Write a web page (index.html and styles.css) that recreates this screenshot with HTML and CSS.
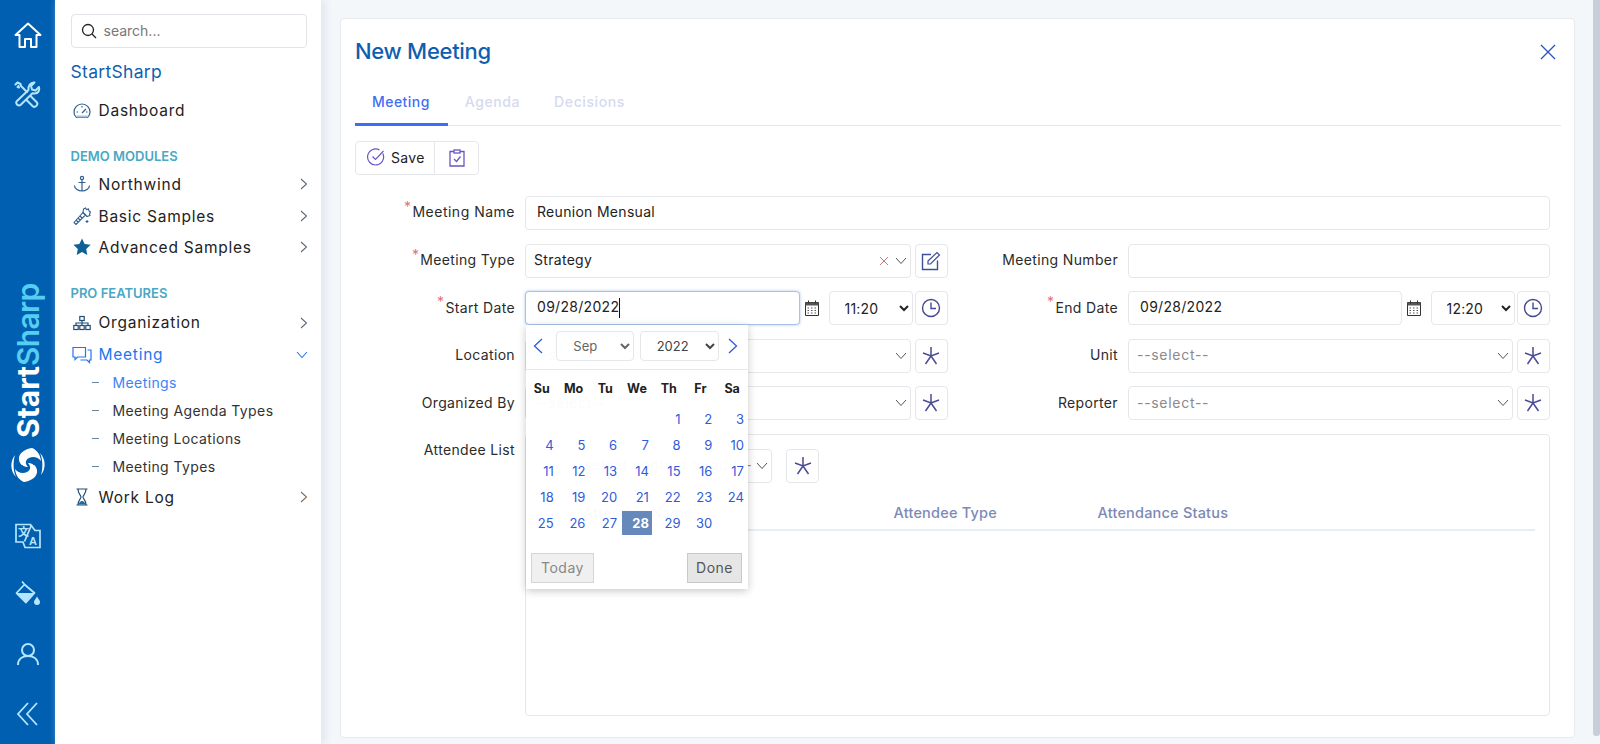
FILE: index.html
```html
<!DOCTYPE html>
<html lang="en">
<head>
  <meta charset="UTF-8">
  <meta name="viewport" content="width=device-width, initial-scale=1.0">
  <title>New Meeting</title>
  <link rel="stylesheet" href="styles.css">
</head>
<body>
  <div class="rail">
    <svg class="rail-home" viewBox="0 0 28 28" width="28" height="28"><path d="M1.500 14 14 2.500 26.500 14H22.500V26H17V18H11V26H5.500V14Z" fill="none" stroke="#fff" stroke-width="2" stroke-linejoin="round"/></svg>
    <svg class="rail-tools" viewBox="0 0 28 28" width="28" height="28" fill="none" stroke="#b5e6ff" stroke-width="2" stroke-linejoin="round" stroke-linecap="round"><path d="M20.500 1.500 17 5l1 3.500 3.500 1 3.500-3.500c1 3-.5 6.500-4.500 6.500-1 0-1.500 0-2-.2L7 23.500c-2.500 2.500-6.500-1-4-3.500L14.500 9c-.8-4 2-8 6-7.500Z"/><path d="M1.500 3.500 3.500 1.500l3 1.500.5 2L13 11M16.500 15l6 6c2.500 2.500-1.500 6.500-4 4l-6-6M3.500 6l1.500.5-.5-1.500"/></svg>
    <div class="rail-brand"><span>Start</span><span class="rail-brand-b">Sharp</span></div>
    <svg class="rail-logo" viewBox="0 0 36 36" width="36" height="36" fill="#fff">
      <path d="M22 1C14 2 8 7 9 13c1 5 5 7 9 7-3-3-3-7 1-9 4-2 9-1 12 3-1-7-4-11-9-13Z"/>
      <path d="M22 1C14 2 8 7 9 13c1 5 5 7 9 7-3-3-3-7 1-9 4-2 9-1 12 3-1-7-4-11-9-13Z" transform="rotate(180 18 18)"/>
      <path d="M5 8C0 14 0 24 6 30 3 24 3 14 5 8Z"/>
      <path d="M5 8C0 14 0 24 6 30 3 24 3 14 5 8Z" transform="rotate(180 18 18)"/>
      <g fill="#005fb0"><circle cx="21" cy="14" r="1"/><circle cx="24" cy="17" r="1"/><circle cx="15" cy="22" r="1"/><circle cx="12" cy="19" r="1"/></g>
    </svg>
    <svg class="rail-lang" viewBox="0 0 26 26" width="26" height="26" fill="none" stroke="#b5e6ff" stroke-width="1.700"><path d="M1 1.500H15.500L20 7.500H25V24.500H10L8 19H1Z"/><path d="M16.500 2 9.500 18.500"/><text x="3" y="13" class="rail-lang-t" fill="#b5e6ff" stroke="none">文</text><text x="14" y="21.500" class="rail-lang-a" fill="#b5e6ff" stroke="none">A</text></svg>
    <svg class="rail-paint" viewBox="0 0 26 26" width="26" height="26"><path d="M7 1.500 10 5M9.500 4.500 19.500 13 11 22.500 1.500 13Z" fill="none" stroke="#b5e6ff" stroke-width="1.800" stroke-linejoin="round"/><path d="M2 13H19L11 22Z" fill="#b5e6ff"/><path d="M22 16.500c-1.500 2.500-3 4-3 5.500a3 3 0 0 0 6 0c0-1.500-1.500-3-3-5.500Z" fill="#b5e6ff"/></svg>
    <svg class="rail-user" viewBox="0 0 24 24" width="24" height="24" fill="none" stroke="#b5e6ff" stroke-width="2"><circle cx="12" cy="8" r="6"/><path d="M2 23c0-6 4.500-9 10-9s10 3 10 9"/></svg>
    <svg class="rail-collapse" viewBox="0 0 22 24" width="22" height="24" fill="none" stroke="#b5e6ff" stroke-width="1.800"><path d="M11 1 1 12 11 23M20 1 10 12 20 23"/></svg>
  </div>

  <div class="sidebar">
    <div class="search">
      <svg viewBox="0 0 16 16" width="16" height="16" fill="none" stroke="#222" stroke-width="1.300"><circle cx="7" cy="7" r="5.500"/><path d="M11 11 15 15"/></svg>
      <span>search...</span>
    </div>
    <div class="brand">StartSharp</div>
    <div class="nav-item nav-dash">
      <svg class="nav-icon" viewBox="0 0 18 18" fill="none" stroke="#2f5f8f" stroke-width="1.200"><path d="M3.500 15.500C1.500 14 1 12 1 10a8 8 0 0 1 16 0c0 2-.5 4-2.500 5.500Z"/><path d="M9 11l4-4M3.500 10H5M9 4v1.500M13 10h1.500" /><path d="M3.500 13.500H14.500V15.500H3.500Z" fill="#a9c4de" stroke="none"/></svg>
      <span>Dashboard</span>
    </div>
    <div class="nav-head nav-head-demo">DEMO MODULES</div>
    <div class="nav-item nav-first">
      <svg class="nav-icon" viewBox="0 0 18 18" fill="none" stroke="#2f5f8f" stroke-width="1.200"><circle cx="9" cy="3" r="1.600"/><path d="M9 4.500V16M5.500 7.500h7M1.500 10.500c0 3.500 4 5.500 7.500 5.500s7.500-2 7.500-5.500"/></svg>
      <span>Northwind</span>
      <svg class="nav-arrow" viewBox="0 0 8 12"><path d="M1 1l5.500 5L1 11"/></svg>
    </div>
    <div class="nav-item nav-basic">
      <svg class="nav-icon" viewBox="0 0 18 18" fill="none" stroke="#2f5f8f" stroke-width="1.100"><path d="M1 15.500 10 5.500l2.500 2.500-9.500 9.500ZM3 13l2 2M5 11l2 2M7 9l2 2"/><path d="M10.500 2l2-1 1 1.500 2-.5.500 2 1.500 1-1 2 .5 1.500-3 1-4-4Z"/><path d="M14 13v3M12.500 14.500h3" /></svg>
      <span>Basic Samples</span>
      <svg class="nav-arrow" viewBox="0 0 8 12"><path d="M1 1l5.500 5L1 11"/></svg>
    </div>
    <div class="nav-item">
      <svg class="nav-icon" viewBox="0 0 18 18"><path d="M9 .5l2.600 5.500 6 .8-4.400 4.200 1.100 6L9 14l-5.300 3 1.100-6L.4 6.800l6-.8Z" fill="#0f6096"/></svg>
      <span>Advanced Samples</span>
      <svg class="nav-arrow" viewBox="0 0 8 12"><path d="M1 1l5.500 5L1 11"/></svg>
    </div>
    <div class="nav-head nav-head-pro">PRO FEATURES</div>
    <div class="nav-item nav-org">
      <svg class="nav-icon" viewBox="0 0 18 18" fill="none" stroke="#1f4e79" stroke-width="1.200"><rect x="6.800" y="2.500" width="4.400" height="4"/><rect x=".8" y="11.500" width="4.400" height="4"/><rect x="6.800" y="11.500" width="4.400" height="4"/><rect x="12.800" y="11.500" width="4.400" height="4"/><path d="M9 6.500v5M3 11.500V9h12v2.500"/></svg>
      <span>Organization</span>
      <svg class="nav-arrow" viewBox="0 0 8 12"><path d="M1 1l5.500 5L1 11"/></svg>
    </div>
    <div class="nav-item nav-active">
      <svg class="nav-icon nav-icon-chat" viewBox="0 0 20 18" fill="none" stroke="#2176f0" stroke-width="1.200"><path d="M1 1.500H13.500V11H5.500L3 13.500V11H1Z"/><path d="M15.500 4H19V14H17.500V16.500L15 14H8.500"/></svg>
      <span>Meeting</span>
      <svg class="nav-arrow nav-arrow-open" viewBox="0 0 12 8"><path d="M1 1l5 5.500L11 1"/></svg>
    </div>
    <div class="nav-sub nav-sub-active"><i></i>Meetings</div>
    <div class="nav-sub"><i></i>Meeting Agenda Types</div>
    <div class="nav-sub"><i></i>Meeting Locations</div>
    <div class="nav-sub"><i></i>Meeting Types</div>
    <div class="nav-item nav-last">
      <svg class="nav-icon" viewBox="0 0 18 18" fill="none" stroke="#1f4e79" stroke-width="1.200"><path d="M3.500 1H14.500M3.500 17H14.500M5 1C5 6 8 7 8 9S5 12 5 17M13 1C13 6 10 7 10 9S13 12 13 17"/><path d="M5.500 16.500C6 14 8 13 9 13S12 14 12.500 16.500Z" fill="#1f6a99" stroke="none"/></svg>
      <span>Work Log</span>
      <svg class="nav-arrow nav-arrow-log" viewBox="0 0 8 12"><path d="M1 1l5.500 5L1 11"/></svg>
    </div>
  </div>

  <div class="main">
    <div class="card">
      <div class="card-head">
        <h2>New Meeting</h2>
        <svg class="close" viewBox="0 0 16 16" width="16" height="16"><path d="M1 1 15 15M15 1 1 15" stroke="#2b4fc4" stroke-width="1.300" fill="none"/></svg>
      </div>
      <div class="tabs">
        <div class="tab tab-active">Meeting</div>
        <div class="tab">Agenda</div>
        <div class="tab">Decisions</div>
      </div>
      <div class="toolbar">
        <div class="tool tool-save">
          <svg viewBox="0 0 18 18" width="18" height="18" fill="none" stroke="#6a55c8" stroke-width="1.200"><path d="M15.800 5.500A8 8 0 1 1 12.500 2"/><path d="M5.500 8.500 8.500 11.500 16.500 3"/></svg>
          Save
        </div>
        <div class="tool tool-apply">
          <svg viewBox="0 0 16 18" width="16" height="18" fill="none" stroke="#6a55c8" stroke-width="1.300"><path d="M5 2.500H1V17H15V2.500H11"/><rect x="5" y="1" width="6" height="3"/><path d="M5 10 7.500 12.500 11.500 7.500"/></svg>
        </div>
      </div>

      <div class="form">
        <label class="lbl lbl-name"><span class="req">*</span>Meeting Name</label>
        <input class="input wide" type="text" value="Reunion Mensual">

        <label class="lbl"><span class="req">*</span>Meeting Type</label>
        <div class="field">
          <div class="sel">
            <span class="sel-text sel-dark">Strategy</span>
            <svg class="sel-x" viewBox="0 0 10 10"><path d="M1 1 9 9M9 1 1 9"/></svg>
            <svg class="sel-arrow" viewBox="0 0 12 8"><path d="M1 1l5 5.500L11 1"/></svg>
          </div>
          <div class="btn">
            <svg viewBox="0 0 20 20" width="20" height="20" fill="none" stroke="#3f4f96" stroke-width="1.400"><path d="M10 3.500H1.500V18.500H16.500V9.500"/><path d="M7 10 16 1.500 18.500 4 9.500 13H7Z" stroke-width="1.200"/></svg>
          </div>
        </div>
        <label class="lbl">Meeting Number</label>
        <input class="input" type="text">

        <label class="lbl"><span class="req">*</span>Start Date</label>
        <div class="field date-field">
          <div class="input date-input date-focus">09/28/2022<span class="caret"></span></div>
          <svg class="cal-icon" viewBox="0 0 14 16" width="14" height="16"><path d="M.5 2.500h13v13H.5Z" fill="#fff" stroke="#333"/><path d="M.5 2.500h13v3H.5Z" fill="#555"/><path d="M3.500.5v3M10.500.5v3" stroke="#333"/><path d="M2.500 8h1.500M6 8h1.500M9.500 8h1.500M2.500 10.500h1.500M6 10.500h1.500M9.500 10.500h1.500M2.500 13h1.500M6 13h1.500M9.500 13h1.500" stroke="#555"/></svg>
          <select class="time"><option>11:20</option></select>
          <div class="btn btn-clock">
            <svg viewBox="0 0 20 20" width="20" height="20" fill="none" stroke="#45498f" stroke-width="1.400"><circle cx="10" cy="10" r="8.500"/><path d="M10 4.500V10.500H15"/></svg>
          </div>

          <div class="calendar">
            <div class="cal-top">
              <svg class="cal-nav" viewBox="0 0 10 16" width="10" height="16"><path d="M9 1 1.500 8 9 15"/></svg>
              <select class="cal-month"><option>Sep</option></select>
              <select class="cal-year"><option>2022</option></select>
              <svg class="cal-nav" viewBox="0 0 10 16" width="10" height="16"><path d="M1 1l7.500 7L1 15"/></svg>
            </div>
            <div class="cal-grid cal-days">
              <div>Su</div><div>Mo</div><div>Tu</div><div>We</div><div>Th</div><div>Fr</div><div>Sa</div>
            </div>
            <div class="cal-grid cal-nums">
              <a></a><a></a><a></a><a></a><a>1</a><a>2</a><a>3</a>
              <a>4</a><a>5</a><a>6</a><a>7</a><a>8</a><a>9</a><a>10</a>
              <a>11</a><a>12</a><a>13</a><a>14</a><a>15</a><a>16</a><a>17</a>
              <a>18</a><a>19</a><a>20</a><a>21</a><a>22</a><a>23</a><a>24</a>
              <a>25</a><a>26</a><a>27</a><a class="cal-sel">28</a><a>29</a><a>30</a><a></a>
            </div>
            <div class="cal-foot">
              <div class="cal-btn cal-today">Today</div>
              <div class="cal-btn cal-done">Done</div>
            </div>
          </div>
        </div>
        <label class="lbl"><span class="req">*</span>End Date</label>
        <div class="field">
          <div class="input date-input">09/28/2022</div>
          <svg class="cal-icon" viewBox="0 0 14 16" width="14" height="16"><path d="M.5 2.500h13v13H.5Z" fill="#fff" stroke="#333"/><path d="M.5 2.500h13v3H.5Z" fill="#555"/><path d="M3.500.5v3M10.500.5v3" stroke="#333"/><path d="M2.500 8h1.500M6 8h1.500M9.500 8h1.500M2.500 10.500h1.500M6 10.500h1.500M9.500 10.500h1.500M2.500 13h1.500M6 13h1.500M9.500 13h1.500" stroke="#555"/></svg>
          <select class="time"><option>12:20</option></select>
          <div class="btn btn-clock">
            <svg viewBox="0 0 20 20" width="20" height="20" fill="none" stroke="#45498f" stroke-width="1.400"><circle cx="10" cy="10" r="8.500"/><path d="M10 4.500V10.500H15"/></svg>
          </div>
        </div>

        <label class="lbl">Location</label>
        <div class="field">
          <div class="sel"><span class="sel-text">--select--</span><svg class="sel-arrow" viewBox="0 0 12 8"><path d="M1 1l5 5.500L11 1"/></svg></div>
          <div class="btn"><svg class="aster" viewBox="0 0 20 20" width="20" height="20"><path d="M10 1V10M2 7 10 10 18 7M10 10 4.500 18M10 10 15.500 18"/></svg></div>
        </div>
        <label class="lbl">Unit</label>
        <div class="field">
          <div class="sel"><span class="sel-text">--select--</span><svg class="sel-arrow" viewBox="0 0 12 8"><path d="M1 1l5 5.500L11 1"/></svg></div>
          <div class="btn"><svg class="aster" viewBox="0 0 20 20" width="20" height="20"><path d="M10 1V10M2 7 10 10 18 7M10 10 4.500 18M10 10 15.500 18"/></svg></div>
        </div>

        <label class="lbl">Organized By</label>
        <div class="field">
          <div class="sel"><span class="sel-text">--select--</span><svg class="sel-arrow" viewBox="0 0 12 8"><path d="M1 1l5 5.500L11 1"/></svg></div>
          <div class="btn"><svg class="aster" viewBox="0 0 20 20" width="20" height="20"><path d="M10 1V10M2 7 10 10 18 7M10 10 4.500 18M10 10 15.500 18"/></svg></div>
        </div>
        <label class="lbl">Reporter</label>
        <div class="field">
          <div class="sel"><span class="sel-text">--select--</span><svg class="sel-arrow" viewBox="0 0 12 8"><path d="M1 1l5 5.500L11 1"/></svg></div>
          <div class="btn"><svg class="aster" viewBox="0 0 20 20" width="20" height="20"><path d="M10 1V10M2 7 10 10 18 7M10 10 4.500 18M10 10 15.500 18"/></svg></div>
        </div>

        <label class="lbl lbl-top">Attendee List</label>
        <div class="attendees">
          <div class="att-add">
            <div class="sel"><span class="sel-text">--select contact to add--</span><svg class="sel-arrow" viewBox="0 0 12 8"><path d="M1 1l5 5.500L11 1"/></svg></div>
            <div class="btn"><svg class="aster" viewBox="0 0 20 20" width="20" height="20"><path d="M10 1V10M2 7 10 10 18 7M10 10 4.500 18M10 10 15.500 18"/></svg></div>
          </div>
          <div class="att-head">
            <div class="att-name">Attendee Name</div>
            <div class="att-type">Attendee Type</div>
            <div>Attendance Status</div>
          </div>
        </div>
      </div>
    </div>
  </div>

  <div class="scrollbar"><div class="scrollbar-thumb"></div></div>
</body>
</html>
```

FILE: styles.css
```css
* { box-sizing: border-box; }
html, body { height: 100%; }
body { margin: 0; display: flex; height: 744px; overflow: hidden; font-family: Inter, "Open Sans", sans-serif; font-size: 14px; color: #222; background: #f4f7fa; }

.rail { width: 55px; flex: none; background: #005fb0; display: flex; flex-direction: column; align-items: center; }
.rail svg { display: block; flex: none; }
.rail-home { margin-top: 21px; }
.rail-tools { margin-top: 32px; }
.rail-brand { writing-mode: vertical-rl; transform: rotate(180deg); font-size: 30px; font-weight: 700; color: #fff; line-height: 30px; height: 156px; margin-top: 173px; white-space: nowrap; display: flex; flex-direction: row; justify-content: flex-start; }
.rail-brand-b { color: #56cdf2; font-weight: 600; letter-spacing: -.7px; }
.rail-logo { margin-top: 9px; }
.rail-lang { margin-top: 40px; }
.rail-lang-t { font-family: "Noto Sans CJK SC", sans-serif; font-size: 11px; font-weight: 700; }
.rail-lang-a { font-family: "Liberation Sans", sans-serif; font-size: 11px; font-weight: 700; }
.rail-paint { margin-top: 31px; }
.rail-user { margin-top: 36px; }
.rail-collapse { margin-top: 36px; }

.sidebar { width: 266px; flex: none; background: #fff; padding: 14px 15px 0 15.500px; box-shadow: 4px 0 8px #dfe6ee; }
.search { height: 34px; width: 236px; border: 1px solid #e2e4ea; border-radius: 4px; display: flex; align-items: center; padding-left: 9px; color: #777; font-size: 14px; }
.search span { margin-left: 7px; padding-bottom: 2px; }
.brand { height: 24px; line-height: 24px; margin-top: 12px; color: #0f5fb0; font-size: 17.500px; letter-spacing: .3px; }
.nav-item { height: 31px; padding-top: 2px; display: flex; align-items: center; font-size: 15.500px; color: #222; letter-spacing: .75px; }
.nav-item span { margin-left: 8px; }
.nav-icon { width: 18px; height: 18px; flex: none; margin-left: 2px; }
.nav-icon-chat { width: 20px; margin-left: 1px; }
.nav-icon-chat + span { margin-left: 7px; }
.nav-arrow { width: 8px; height: 12px; margin-left: auto; margin-right: -1.500px; fill: none; stroke: #5b6b7b; stroke-width: 1.100; }
.nav-arrow-open { width: 12px; height: 8px; stroke: #2176f0; margin-right: -2px; }
.nav-arrow-log { stroke: #8a6a50; }
.nav-dash { margin-top: 10px; }
.nav-head { height: 18px; line-height: 18px; font-size: 13px; font-weight: 600; color: #4aa8c4; }
.nav-head-demo { margin-top: 21.500px; }
.nav-head-pro { margin-top: 22.500px; }
.nav-first { margin-top: 3px; }
.nav-basic { margin-top: 1px; }
.nav-org { margin-top: 4px; }
.nav-active { color: #1877f2; margin-top: 1px; }
.nav-sub { height: 28px; display: flex; align-items: center; padding-left: 21px; padding-top: 1px; font-size: 14px; letter-spacing: .4px; color: #333; }
.nav-sub i { width: 7px; height: 1px; background: #6d8197; margin-right: 14px; flex: none; }
.nav-sub-active { color: #3b82f6; margin-top: -1px; }
.nav-last { margin-top: .5px; }

.main { flex: 1; min-width: 0; height: 744px; overflow: hidden; padding: 18px 18px 0 19px; }
.scrollbar { width: 7px; flex: none; height: 744px; background: #f4f7fa; }
.scrollbar-thumb { height: 736px; background: #c8ced9; border-radius: 0 0 3px 3px; }

.card { height: 720px; background: #fff; border: 1px solid #e8eaef; border-radius: 4px; padding: 15px 13px 0 14px; }
.card-head { display: flex; align-items: center; justify-content: space-between; height: 34px; padding-right: 5px; }
.card-head h2 { margin: 0; font-size: 22px; font-weight: 500; color: #0f5fb0; letter-spacing: -.3px; }
.close { display: block; margin-top: 2px; }
.tabs { display: flex; height: 41.500px; margin-top: 16px; border-bottom: 1.500px solid #e5e7eb; }
.tab { padding: 1px 17px 0; height: 41.500px; line-height: 34px; font-size: 14px; font-weight: 500; color: #d5daee; letter-spacing: .6px; }
.tab-active { color: #3f6ef5; letter-spacing: .45px; padding: 1px 18px 0 17px; border-bottom: 3px solid #3f6ef5; }

.toolbar { display: inline-flex; height: 34px; margin-top: 15.500px; border: 1px solid #e5e7eb; border-radius: 4px; vertical-align: top; }
.tool { display: flex; align-items: center; height: 100%; }
.tool-save { padding: 0 9px 2px 11px; border-right: 1px solid #e5e7eb; gap: 6px; font-size: 14px; letter-spacing: .3px; }
.tool-apply { padding: 0 13px 0 14px; }

.form { display: grid; grid-template-columns: 170px 422.500px 180.500px 421.500px; row-gap: 13.600px; margin-top: 21px; }
.lbl { display: flex; align-items: center; justify-content: flex-end; padding: 0 10px 2px 0; height: 34px; font-size: 14px; letter-spacing: .35px; color: #2b2b2b; }
.lbl-name { padding-bottom: 4px; letter-spacing: .5px; }
.req { color: #e8707a; align-self: flex-start; font-size: 14px; line-height: 18px; margin-top: 2px; margin-right: 1px; }
.lbl-top { align-self: start; }
.input { height: 34px; border: 1px solid #e5e7eb; border-radius: 4px; padding: 0 11px 2px; font: inherit; letter-spacing: .3px; color: #222; background: #fff; display: block; outline: none; width: 100%; }
.wide { grid-column: 2 / 5; padding-bottom: 4px; }
.field { display: flex; align-items: center; gap: 4px; position: relative; height: 34px; }
.date-input { flex: 1; line-height: 30px; min-width: 0; width: auto; }
.date-focus { border-color: #a9c3e8; box-shadow: 0 0 3px #a9c3e8; }
.caret { display: inline-block; width: 1px; height: 20px; background: #111; vertical-align: middle; }
.cal-icon { flex: none; margin: 0 6px 0 1px; }
.time { width: 84px; height: 34px; flex: none; border: 1px solid #e5e7eb; border-radius: 4px; background: #fff; padding-left: 11px; font: inherit; color: #222; letter-spacing: .2px; }
.btn { width: 33px; height: 34px; flex: none; border: 1px solid #e5e7eb; border-radius: 4px; display: flex; align-items: center; justify-content: center; background: #fff; }
.btn-clock { margin-left: -2px; }
.aster { fill: none; stroke: #4a4a96; stroke-width: 1.500; }

.sel { flex: 1; min-width: 0; height: 34px; border: 1px solid #e5e7eb; border-radius: 4px; display: flex; align-items: center; padding: 0 3px 0 8px; background: #fff; }
.sel-text { flex: 1; padding-bottom: 2px; color: #8a8a8a; letter-spacing: .7px; white-space: nowrap; }
.sel-dark { color: #222; letter-spacing: .3px; }
.sel-x { width: 10px; height: 10px; fill: none; stroke: #c77a7a; stroke-width: 1; margin-right: 6px; }
.sel-arrow { width: 12px; height: 8px; fill: none; stroke: #555; stroke-width: 1; flex: none; }

.attendees { grid-column: 2 / 5; height: 282px; border: 1px solid #e5e7eb; border-radius: 4px; padding: 14px 14px 0; }
.att-add { display: flex; gap: 14px; margin-left: 21px; width: 258px; }
.att-head { display: flex; height: 48px; line-height: 59px; border-bottom: 2px solid #e8edf3; color: #7c89b5; font-weight: 500; letter-spacing: .2px; font-size: 14.500px; }
.att-name { width: 353.500px; padding-left: 43px; }
.att-type { width: 204px; }

.calendar { position: absolute; left: 1px; top: 34px; width: 222px; height: 264px; background: rgba(255, 255, 255, .96); box-shadow: 0 2px 8px rgba(0, 0, 0, .22); z-index: 5; }
.cal-top { display: flex; align-items: center; justify-content: space-between; height: 45px; padding: 0 10px 3px 7px; border-bottom: 1px solid #e6e8ee; }
.cal-nav { fill: none; stroke: #2f5bdc; stroke-width: 1.300; flex: none; }
.cal-top select { height: 30px; border: 1px solid #e5e7eb; border-radius: 4px; background: #fff; font: inherit; font-size: 13px; padding-left: 12px; color: #666; }
.cal-month { width: 78px; margin-left: 13px; }
.cal-top .cal-year { width: 79px; margin-left: 5px; margin-right: 9px; color: #444; }
.cal-grid { display: grid; grid-template-columns: repeat(7, 1fr); }
.cal-days { height: 36px; align-items: center; text-align: center; font-size: 12.500px; font-weight: 700; color: #222; }
.cal-nums { grid-auto-rows: 26px; color: #2f5bdc; font-size: 13px; }
.cal-nums a { display: block; text-align: right; padding-right: 4px; line-height: 26px; }
.cal-nums .cal-sel { background: #6688bb; color: #fff; font-weight: 700; height: 24px; line-height: 25px; width: 30px; justify-self: center; margin-top: 1px; padding-right: 3px; }
.cal-foot { display: flex; justify-content: space-between; margin-top: 17px; padding: 0 6px 0 5px; }
.cal-btn { height: 30px; line-height: 28px; text-align: center; border: 1px solid #d5d5d5; font-size: 14px; letter-spacing: .5px; }
.cal-today { width: 63px; background: #f0f0f0; color: #888; }
.cal-done { width: 55px; background: #e6e6e6; color: #555; border-color: #c9c9c9; }
```
